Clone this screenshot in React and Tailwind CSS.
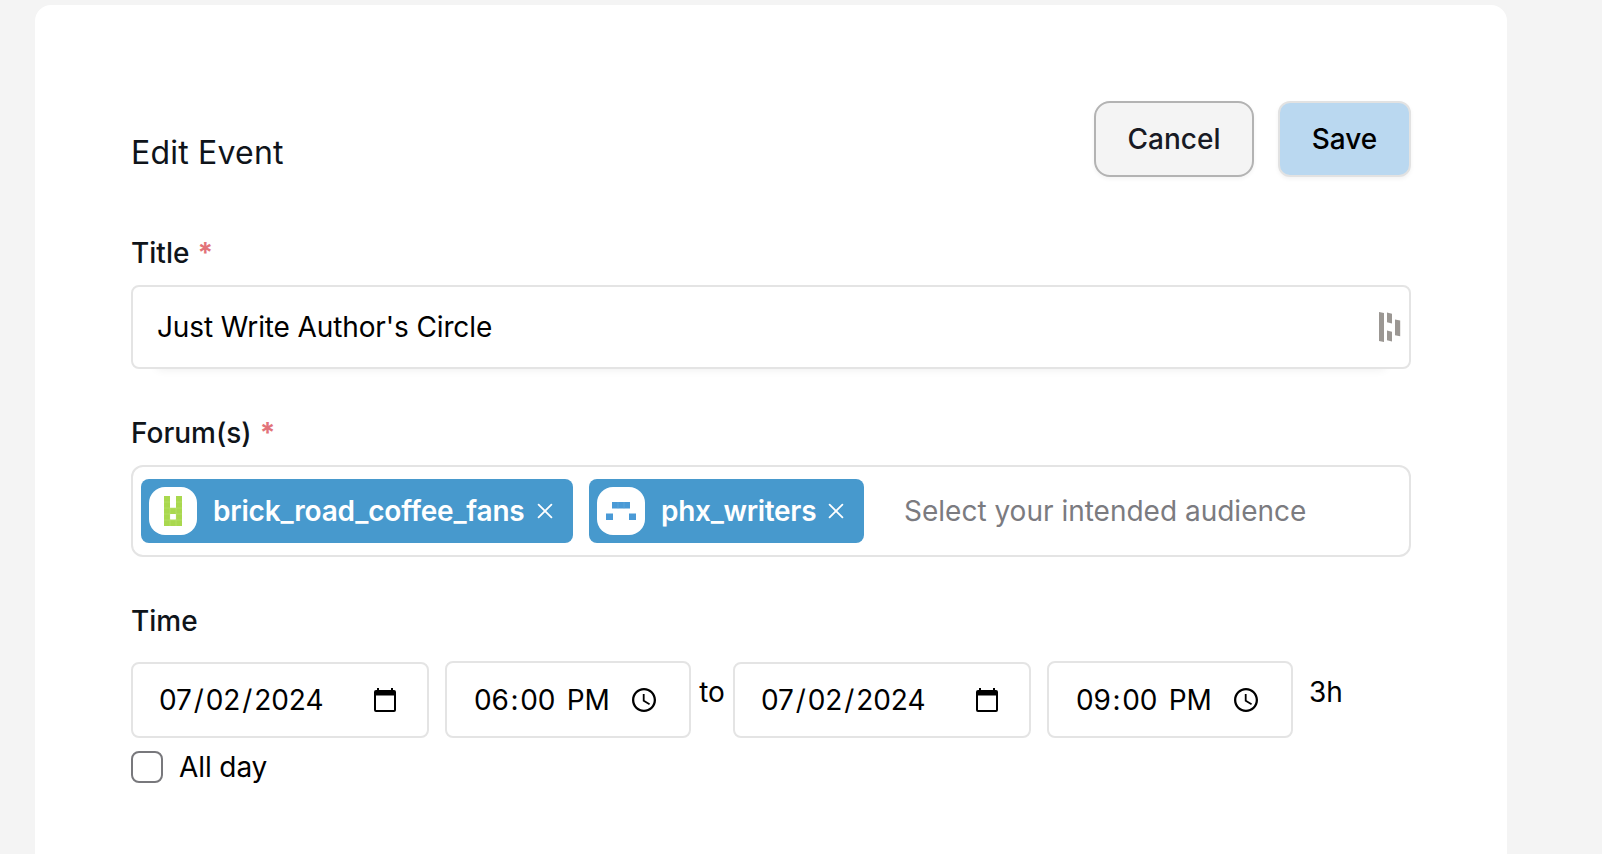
function CloseIcon() {
  return (
    <svg viewBox="0 0 16 16" className="size-4 shrink-0" fill="none" stroke="white" strokeWidth="1.8" strokeLinecap="round">
      <path d="M1.6 1.6 14.4 14.4M14.4 1.6 1.6 14.4" />
    </svg>
  );
}

function CalendarIcon() {
  return (
    <svg viewBox="0 0 22 24" className="h-6 w-[22px] shrink-0">
      <path
        fillRule="evenodd"
        d="M3 0h2v2h12V0h2v2h1a2 2 0 0 1 2 2v18a2 2 0 0 1-2 2H2a2 2 0 0 1-2-2V4a2 2 0 0 1 2-2h1zM2 7.5V22h18V7.5z"
      />
    </svg>
  );
}

function ClockIcon() {
  return (
    <svg viewBox="2 2 20 20" className="size-6 shrink-0">
      <path d="M11.99 2C6.47 2 2 6.48 2 12s4.47 10 9.99 10C17.52 22 22 17.52 22 12S17.52 2 11.99 2zM12 20.1c-4.48 0-8.1-3.62-8.1-8.1s3.62-8.1 8.1-8.1 8.1 3.62 8.1 8.1-3.62 8.1-8.1 8.1z" />
      <path d="M12.5 7H11v6l5.25 3.15.75-1.23-4.5-2.67z" />
    </svg>
  );
}

function ExtensionIcon() {
  return (
    <svg viewBox="0 0 22 30" className="h-[30px] w-[22px]" fill="#9b9793">
      <path d="M0 0l5 .9V30L0 29.1zM8 .6l5 1.2v9.6L8 10.2zM8 18.6l5 1.2v9.6L8 28.2zM16 7.6l5.2 1v15.6l-5.2-1z" />
    </svg>
  );
}

function CoffeeAvatar() {
  return (
    <svg viewBox="0 0 48 48" className="size-12 shrink-0 rounded-2xl bg-white">
      <path
        fill="#a9d84e"
        fillRule="evenodd"
        d="M15 9h6v12h6V9h6v30H15zM21 27v5.5h6V27z"
      />
      <path stroke="#bce273" strokeWidth="0.6" d="M15 15h6M27 15h6M15 21h18M15 27h6M27 27h6M15 33h18M21 21v18M27 21v18" fill="none" />
      <path fill="white" d="M21.3 27.3h5.4v4.9h-5.4z" />
    </svg>
  );
}

function WritersAvatar() {
  return (
    <svg viewBox="0 0 48 48" className="size-12 shrink-0 rounded-2xl bg-white">
      <path fill="#4a9ad6" d="M15 15h18v6.5H15zM9 26.5h7V33H9zM32 26.5h7V33h-7z" />
      <path stroke="#6aaede" strokeWidth="0.5" d="M21 15v6.5M27 15v6.5" />
    </svg>
  );
}

function Label({ children, required }) {
  return (
    <div className="text-[28px] leading-10 font-medium text-[#0f141a]">
      {children}
      {required && <span className="ml-2 font-bold text-[#e2737a]">*</span>}
    </div>
  );
}

function Tag({ avatar, name, width, tracking }) {
  return (
    <div className={`flex h-16 items-center justify-between rounded-lg bg-[#4799cd] pr-5 pl-2 ${width}`}>
      <div className="flex items-center gap-4">
        {avatar}
        <span className={`text-[28px] leading-10 font-semibold text-white ${tracking}`}>{name}</span>
      </div>
      <CloseIcon />
    </div>
  );
}

function DateBox() {
  return (
    <div className="flex h-[76px] w-[298px] items-center justify-between rounded-lg border-2 border-[#e4e4e4] pr-[31px] pl-[24px]">
      <div className="flex text-[28px] leading-10 tracking-[-0.1px]">
        <span className="px-0.5">07</span>
        <span>/</span>
        <span className="px-0.5">02</span>
        <span>/</span>
        <span className="px-0.5">2024</span>
      </div>
      <CalendarIcon />
    </div>
  );
}

function TimeBox({ hour }) {
  return (
    <div className="flex h-[77px] w-[246px] items-center justify-between rounded-lg border-2 border-[#e4e4e4] pr-[33px] pl-[25px]">
      <div className="flex text-[28px] leading-10 tracking-[-0.25px] whitespace-pre">
        <span className="px-0.5">{hour}</span>
        <span>:</span>
        <span className="px-0.5">00</span>
        <span> </span>
        <span className="px-0.5">PM</span>
      </div>
      <ClockIcon />
    </div>
  );
}

export default function App() {
  return (
    <div className="h-[854px] overflow-hidden bg-[#f4f4f4] pt-[5px] pl-[35px] font-['Inter',sans-serif] text-black">
      <main className="h-[900px] w-[1472px] rounded-2xl bg-white px-24 pt-24">
        <header className="flex h-[76px] items-start">
          <h1 className="mt-8 flex-1 text-[32px] leading-10 tracking-[0.2px] text-[#0f141a]">Edit Event</h1>
          <button className="h-[76px] w-40 rounded-2xl border-2 border-[#b3b3b3] bg-[#f4f4f4] text-[28px] leading-10 font-medium text-[#181a24] shadow-[0_2px_4px_rgba(0,0,0,0.05)]">
            Cancel
          </button>
          <button className="ml-6 h-[76px] w-[133px] rounded-xl border-2 border-[#e2e2e2] bg-[#bad8f0] text-[28px] leading-10 font-medium shadow-[0_2px_4px_rgba(0,0,0,0.05)]">
            Save
          </button>
        </header>

        <section className="mt-14">
          <Label required>Title</Label>
          <div className="mt-3 flex h-[84px] items-center justify-between rounded-lg border-2 border-[#e4e4e4] pr-2 pl-6 shadow-[0_26px_10px_-26px_rgba(0,0,0,0.08)]">
            <span className="text-[28px] leading-10 tracking-[-0.12px]">Just Write Author's Circle</span>
            <ExtensionIcon />
          </div>
        </section>

        <section className="mt-11">
          <Label required>Forum(s)</Label>
          <div className="mt-3 flex h-[92px] items-center gap-4 rounded-xl border-2 border-[#e4e4e4] pl-2">
            <Tag avatar={<CoffeeAvatar />} name="brick_road_coffee_fans" width="w-[432px]" tracking="tracking-[-0.2px]" />
            <Tag avatar={<WritersAvatar />} name="phx_writers" width="w-[275px]" tracking="tracking-[-0.3px]" />
            <span className="ml-6 text-[28px] leading-10 text-[#7b7b80]">Select your intended audience</span>
          </div>
        </section>

        <section className="mt-11">
          <Label>Time</Label>
          <div className="mt-5 flex h-[77px] items-end">
            <DateBox />
            <div className="ml-4">
              <TimeBox hour="06" />
            </div>
            <span className="mb-[26px] w-[42px] text-center text-[28px] leading-10">to</span>
            <DateBox />
            <div className="ml-4">
              <TimeBox hour="09" />
            </div>
            <span className="mb-[26px] ml-4 text-[28px] leading-10">3h</span>
          </div>
          <div className="mt-[9px] flex items-center gap-4">
            <span className="size-8 rounded-lg border-2 border-[#78787c]" />
            <span className="text-[28px] leading-10 tracking-[-0.1px]">All day</span>
          </div>
        </section>
      </main>
    </div>
  );
}
